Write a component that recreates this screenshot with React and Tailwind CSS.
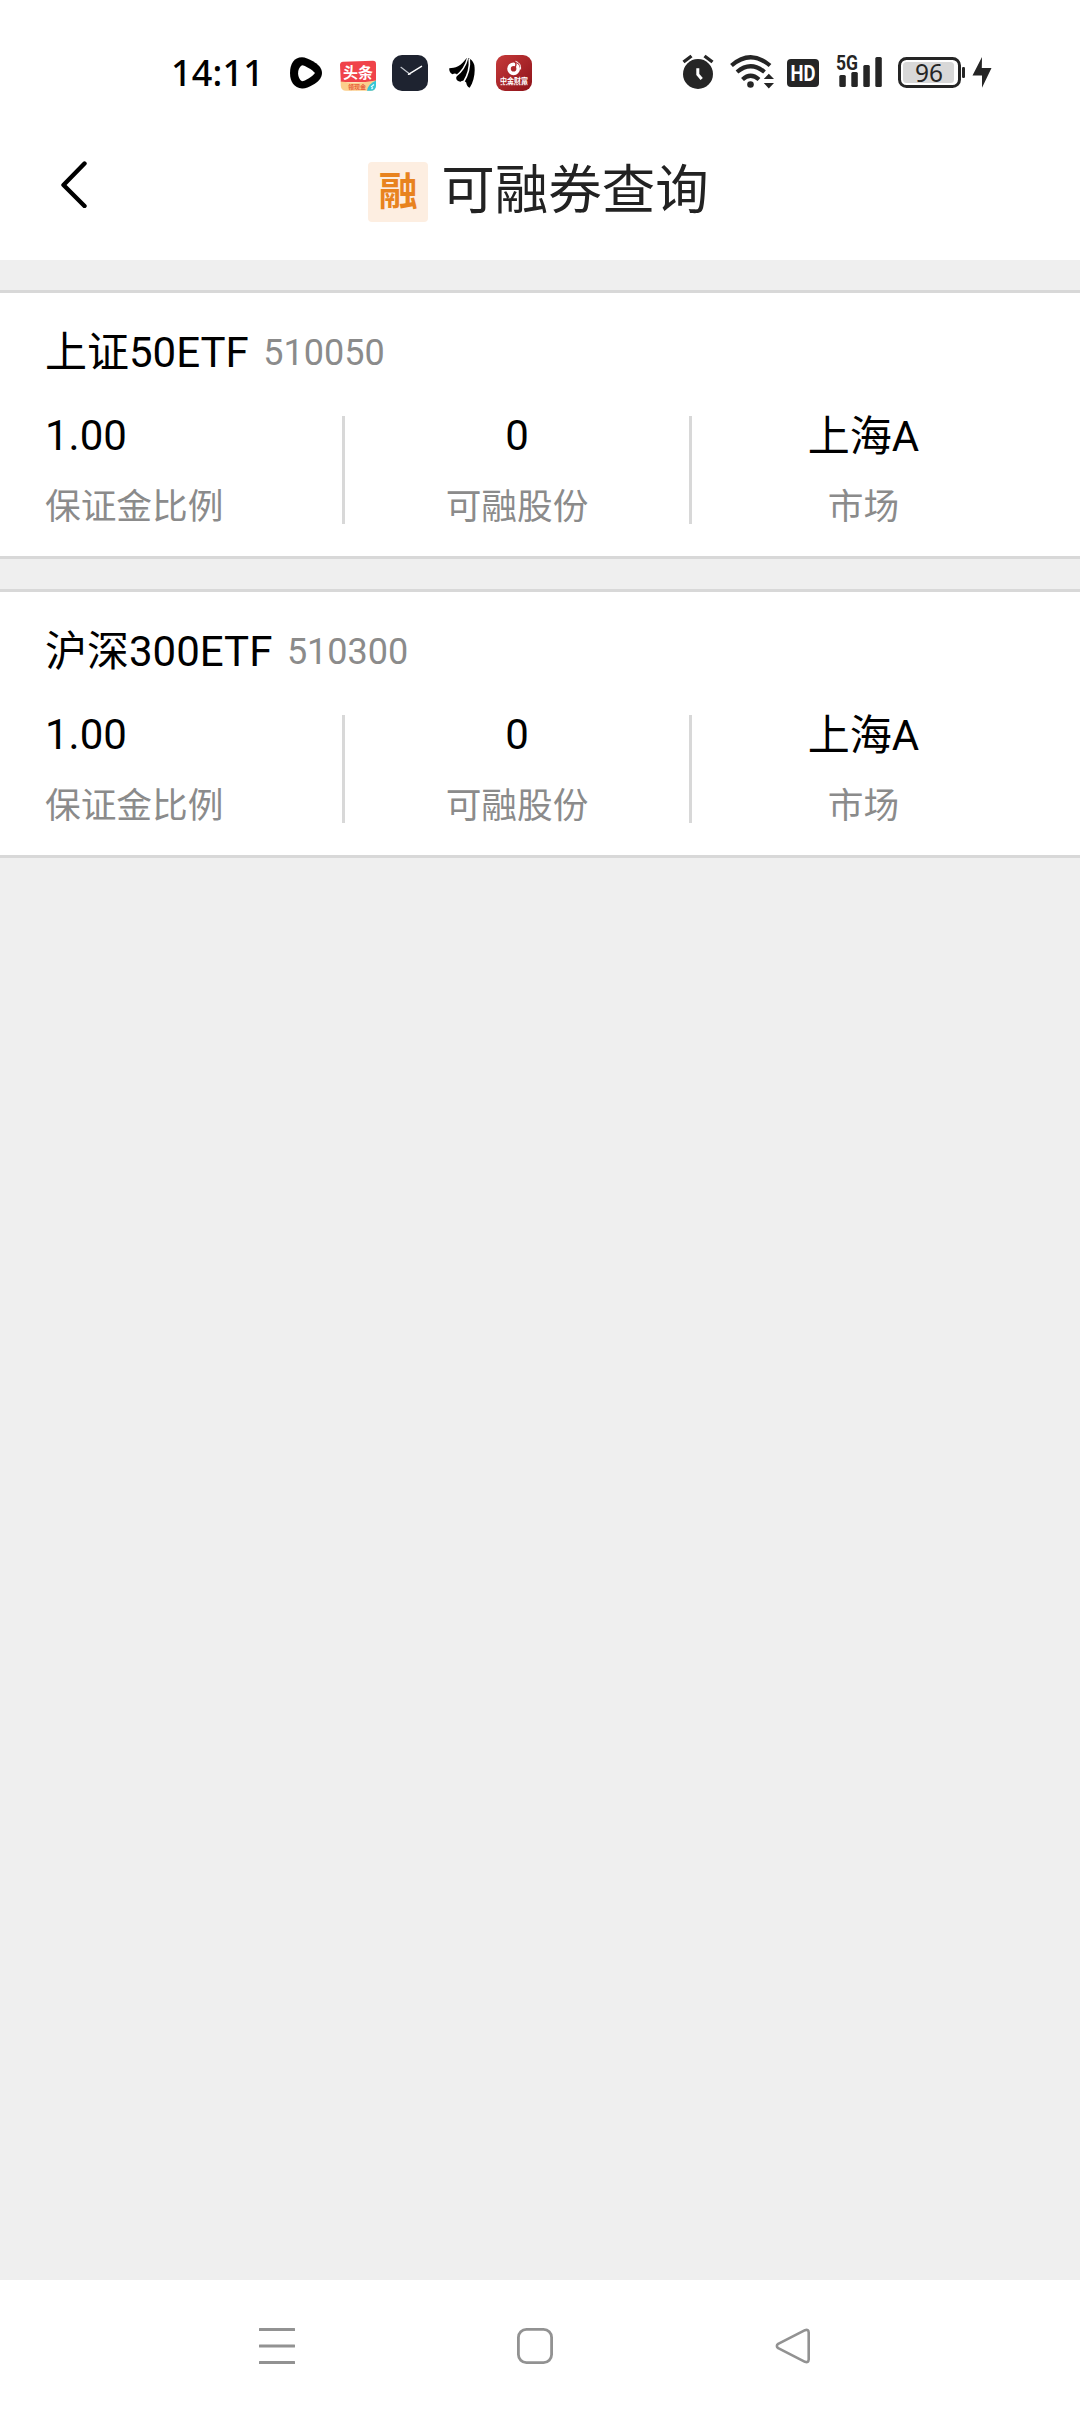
import React from 'react';

const securities = [
  { name: '上证50ETF', code: '510050', ratio: '1.00', shares: '0', market: '上海A' },
  { name: '沪深300ETF', code: '510300', ratio: '1.00', shares: '0', market: '上海A' },
];

const PlayIcon = () => (
  <svg className="ml-[31px] h-10 w-8" viewBox="0 0 32 40">
    <path
      d="M12 4.3C15 4.3 19 6 23 8.3C28 11.2 32 15 32 20C32 25 28 29 23 31.8C19 34 15 35.8 12 35.5C4 34.5 0 29 0 20C0 11 4 4.3 12 4.3Z"
      fill="#000"
    />
    <path d="M12 12.3C15 12.6 22 16.5 25 20C22 24 15 28 12 28.3C7 25.5 6.5 15.5 12 12.3Z" fill="#fff" />
  </svg>
);

const ToutiaoIcon = () => (
  <svg className="ml-[18px] h-10 w-9" viewBox="0 0 36 40">
    <path d="M3 8.8L33 7.8Q36 7.8 36 11V29H0.8L0 12Q0 9 3 8.8Z" fill="#f0434a" />
    <path d="M0.6 28.5Q18 31 35.8 27.5V33Q35.4 37.8 31 37.8H6Q1.2 37.8 0.8 33Z" fill="#fbcf8c" />
    <path d="M36 27.5V33Q35.5 37.8 31 37.8H27Q28 31 36 27.5Z" fill="#35c5d6" />
    <path d="M31 34L34 31.5M31.5 36L33 34.5" stroke="#e8ffff" strokeWidth="1.2" />
    <text x="18" y="25" textAnchor="middle" className="font-['Noto_Sans_CJK_SC',sans-serif] text-[15px] font-bold" fill="#fff">
      头条
    </text>
    <text x="17" y="36.3" textAnchor="middle" className="font-['Noto_Sans_CJK_SC',sans-serif] text-[6px] font-bold" fill="#e8603c">
      领现金
    </text>
  </svg>
);

const ClockIcon = () => (
  <svg className="ml-4 h-10 w-9" viewBox="0 0 36 40">
    <rect y="2" width="36" height="36" rx="10" fill="#1e2330" />
    <path d="M9 14.3L18 21.3" stroke="#c3c6cd" strokeWidth="1.2" strokeLinecap="round" />
    <path d="M16.5 21.3L29.5 13.3" stroke="#fff" strokeWidth="1.4" strokeLinecap="round" />
  </svg>
);

const WingIcon = () => (
  <svg className="ml-[21px] h-10 w-[26px]" viewBox="0 0 26 40">
    <path
      d="M17.5 5.3C21 5 24 7.5 25.3 12C26.5 19 25 28 20.7 34.8C18.5 34 17.5 32 17.2 29.5C15 27 13 27.5 11.5 28.7C8.5 28 6.8 26.5 7.3 24.5L7.8 21C6 20 4.8 20.5 3.5 21.3C0.8 19.5 0 17.5 0.3 15.3C3 14.5 6 15 9 13.2C12.5 11.5 15 8.5 17.5 5.3Z"
      fill="#000"
    />
    <path d="M18.6 5Q16 16.5 6.5 23.5" fill="none" stroke="#fff" strokeWidth="1.4" />
    <path d="M20.3 6Q21.5 18 14.3 29.5" fill="none" stroke="#fff" strokeWidth="1.6" />
  </svg>
);

const WealthIcon = () => (
  <svg className="ml-[21px] h-10 w-9" viewBox="0 0 36 40">
    <defs>
      <linearGradient id="wealth" x1="0" y1="0" x2="1" y2="1">
        <stop offset="0" stopColor="#c63a3a" />
        <stop offset="1" stopColor="#8d1219" />
      </linearGradient>
    </defs>
    <rect y="2" width="36" height="36" rx="9" fill="url(#wealth)" />
    <circle cx="17.6" cy="15.8" r="4.6" fill="none" stroke="#fff" strokeWidth="3.6" />
    <path d="M17.5 7.5C20.5 9.5 20.8 12 18.5 15" fill="none" stroke="#b02a2e" strokeWidth="1.4" />
    <path d="M19.5 8.3Q25.3 10 24.6 16.5" fill="none" stroke="#fff" strokeWidth="1" />
    <text x="18" y="29.8" textAnchor="middle" className="font-['Noto_Sans_CJK_SC',sans-serif] text-[7px] font-bold" fill="#fff">
      中金财富
    </text>
    <path d="M4.5 31.7H31.5" stroke="#fff" strokeOpacity="0.75" strokeWidth="1.2" strokeDasharray="2 0.6" />
  </svg>
);

const AlarmIcon = () => (
  <svg className="h-10 w-8" viewBox="0 0 32 40">
    <circle cx="16" cy="21" r="15" fill="#252525" />
    <path d="M1.5 9L9.5 3M22.5 3L30.5 9" stroke="#252525" strokeWidth="3.4" />
    <path d="M15.8 15.3V21.5L19.7 26" fill="none" stroke="#fff" strokeWidth="3" />
  </svg>
);

const WifiIcon = () => (
  <svg className="ml-4 h-10 w-11" viewBox="0 0 44 40">
    <g fill="none" stroke="#252525" strokeWidth="4.2">
      <path d="M1.5 12.5Q20.5 -4 40 12.5" />
      <path d="M7 19Q20.5 7.5 34.5 19" />
      <path d="M12.5 26.5Q20.5 19 29 26.5" />
    </g>
    <circle cx="20.5" cy="31.5" r="3.3" fill="#252525" />
    <path d="M38.8 20.7L44 26H33.8ZM38.8 35.5L44 30H33.8Z" fill="#252525" />
  </svg>
);

const HdIcon = () => (
  <svg className="ml-[13px] h-10 w-8" viewBox="0 0 32 40">
    <rect y="6" width="32" height="28" rx="4" fill="#252525" />
    <text x="16" y="28" textAnchor="middle" textLength="25" lengthAdjust="spacingAndGlyphs" className="font-[Roboto,sans-serif] text-[22px] font-bold" fill="#fff">
      HD
    </text>
  </svg>
);

const SignalIcon = () => (
  <svg className="ml-[17px] h-[52px] w-[46px]" viewBox="0 -6 46 52">
    <text x="0" y="17.3" textLength="22" lengthAdjust="spacingAndGlyphs" className="font-[Roboto,sans-serif] text-[21px] font-bold" fill="#252525">
      5G
    </text>
    <g fill="#252525">
      <rect x="3.3" y="22" width="6.5" height="12" rx="1.5" />
      <rect x="15.3" y="19" width="6.5" height="15" rx="1.5" />
      <rect x="27.3" y="12" width="6.5" height="22" rx="1.5" />
      <rect x="39.3" y="4" width="6.5" height="30" rx="1.5" />
    </g>
  </svg>
);

const BatteryIcon = () => (
  <svg className="ml-4 h-10 w-[67px]" viewBox="0 0 67 40">
    <rect x="1.5" y="5.5" width="60" height="28" rx="7" fill="#fff" stroke="#252525" strokeWidth="3" />
    <rect x="5" y="9" width="51" height="21" rx="3.5" fill="#d8d8d8" />
    <rect x="64" y="14" width="3" height="11" rx="1.2" fill="#252525" />
    <text x="17" y="28.6" textLength="28" lengthAdjust="spacingAndGlyphs" className="font-['Noto_Sans',sans-serif] text-[25.5px]" fill="#252525">
      96
    </text>
  </svg>
);

const BoltIcon = () => (
  <svg className="ml-[7px] h-10 w-5" viewBox="0 0 20 40">
    <path d="M10 4L0.5 22.5H10V34.8L19.5 15H9.8Z" fill="#252525" />
  </svg>
);

const StatusBar = () => (
  <div className="flex h-[146px] items-center justify-between pl-[170px] pr-[88px]">
    <div className="flex items-center">
      <span className="w-[89px] whitespace-nowrap pl-px font-['Noto_Sans',sans-serif] text-[36px] font-medium leading-10 tracking-[0.2px] text-black">
        14:11
      </span>
      <PlayIcon />
      <ToutiaoIcon />
      <ClockIcon />
      <WingIcon />
      <WealthIcon />
    </div>
    <div className="flex items-center">
      <AlarmIcon />
      <WifiIcon />
      <HdIcon />
      <SignalIcon />
      <BatteryIcon />
      <BoltIcon />
    </div>
  </div>
);

const TitleBar = () => (
  <div className="grid h-[114px] grid-cols-[1fr_auto_1fr] pl-[59px] pr-[62px]">
    <svg className="mt-[14px] h-12 w-7" viewBox="0 0 28 48">
      <path d="M25.5 3.5L4.5 25L25.5 46" fill="none" stroke="#000" strokeWidth="4.4" strokeLinecap="round" strokeLinejoin="round" />
    </svg>
    <div className="flex h-[92px] items-center gap-[13px]">
      <span className="flex size-[60px] items-center justify-center rounded bg-[#fdeee1] text-[39px] font-bold leading-none text-[#e8831f]">
        融
      </span>
      <h1 className="-mt-0.5 text-[53.5px] leading-[60px] text-[#222]">可融券查询</h1>
    </div>
  </div>
);

const SecurityCard = ({ item }) => (
  <div className="h-[269px] border-y-3 border-[#d8d8d8] bg-white px-[45px]">
    <div className="flex items-center gap-[14.5px] pt-[30px]">
      <span className="text-[42px] leading-[60px] text-black">{item.name}</span>
      <span className="text-[36px] leading-[60px] text-[#8b8b8b]">{item.code}</span>
    </div>
    <div className="mt-[33px] flex h-[108px]">
      <div className="w-[300px] border-r-3 border-[#d8d8d8]">
        <p className="-mt-[10px] text-[42px] leading-[60px] text-black">{item.ratio}</p>
        <p className="mt-4 text-[35.7px] leading-[50px] text-[#8b8b8b]">保证金比例</p>
      </div>
      <div className="w-[347px] border-r-3 border-[#d8d8d8] text-center">
        <p className="-mt-[10px] text-[42px] leading-[60px] text-black">{item.shares}</p>
        <p className="mt-4 text-[35.7px] leading-[50px] text-[#8b8b8b]">可融股份</p>
      </div>
      <div className="flex-1 text-center">
        <p className="-mt-[9px] text-[42px] leading-[60px] text-black">{item.market}</p>
        <p className="mt-[15px] text-[35.7px] leading-[50px] text-[#8b8b8b]">市场</p>
      </div>
    </div>
  </div>
);

const NavBar = () => (
  <div className="flex h-[132px] items-start justify-between bg-white pl-[258px] pr-[268px] pt-[47px]">
    <svg className="size-[38px]" viewBox="0 0 38 38" fill="#929292">
      <rect x="1" y="1" width="36" height="3" rx="0.5" />
      <rect x="1" y="17.5" width="36" height="3" rx="0.5" />
      <rect x="1" y="34" width="36" height="3" rx="0.5" />
    </svg>
    <svg className="size-[38px]" viewBox="0 0 38 38" fill="none" stroke="#929292" strokeWidth="2.8">
      <rect x="2.4" y="2.4" width="33.2" height="33.2" rx="8" />
    </svg>
    <svg className="size-[38px]" viewBox="0 0 38 38" fill="none" stroke="#929292" strokeWidth="2.6" strokeLinejoin="round">
      <path d="M31 3.2L4.2 16.8Q1.5 19 4.2 21.2L31 34.8Q34.5 36 34.7 32.5V5.5Q34.5 2 31 3.2Z" />
    </svg>
  </div>
);

export default function App() {
  return (
    <div className="flex h-[2412px] w-[1080px] flex-col bg-[#efefef] font-[Roboto,'Noto_Sans_CJK_SC',sans-serif]">
      <header className="h-[260px] bg-white">
        <StatusBar />
        <TitleBar />
      </header>
      <main className="flex flex-1 flex-col gap-[30px] pt-[30px]">
        {securities.map((item) => (
          <SecurityCard key={item.code} item={item} />
        ))}
      </main>
      <NavBar />
    </div>
  );
}
